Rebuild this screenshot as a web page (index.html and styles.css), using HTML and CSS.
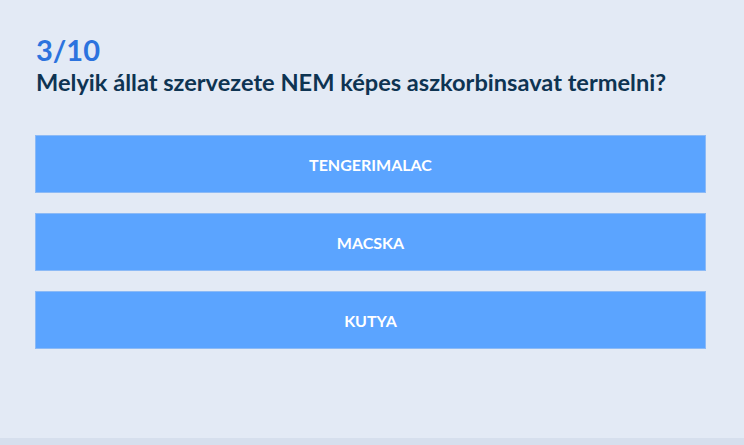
FILE: index.html
```html
<!DOCTYPE html>
<html lang="hu">
<head>
<meta charset="utf-8">
<link rel="stylesheet" href="styles.css">
</head>
<body>
<main class="quiz">
  <header class="quiz-head">
    <div class="counter">3/10</div>
    <h1 class="question">Melyik állat szervezete NEM képes aszkorbinsavat termelni?</h1>
  </header>
  <div class="answers">
    <button class="answer">TENGERIMALAC</button>
    <button class="answer">MACSKA</button>
    <button class="answer">KUTYA</button>
  </div>
</main>
<footer class="bottom-bar"></footer>
</body>
</html>
```
FILE: styles.css
```css
html, body {
  margin: 0;
  padding: 0;
  height: 100%;
}
body {
  background: #e3eaf5;
  font-family: Lato, "Noto Sans", sans-serif;
  display: flex;
  flex-direction: column;
  overflow: hidden;
}
.quiz {
  flex: 1;
  padding: 33px 38px 0 35px;
}
.counter {
  color: #2c73de;
  font-weight: 700;
  font-size: 29px;
  line-height: 34px;
  padding-left: 1px;
}
.question {
  margin: 0;
  padding-top: 1px;
  color: #0e3452;
  font-weight: 700;
  font-size: 23.6px;
  line-height: 28px;
  padding-left: 1px;
}
.answers {
  margin-top: 39px;
  display: flex;
  flex-direction: column;
  gap: 20px;
}
.answer {
  height: 58px;
  background: #5ba4ff;
  border: 1px solid #8cbaf6;
  color: #ffffff;
  font-family: Lato, "Noto Sans", sans-serif;
  font-weight: 700;
  font-size: 16px;
  padding: 0;
  cursor: pointer;
}
.bottom-bar {
  height: 7px;
  background: #d6dfed;
}
```
